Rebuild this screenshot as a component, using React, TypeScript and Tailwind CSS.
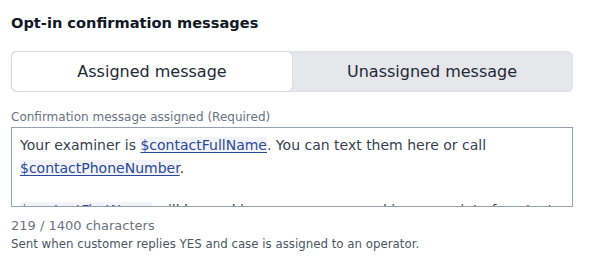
import { useState } from 'react';

const FONT = "font-['DejaVu_Sans',sans-serif]";

function Variable({ name }: { name: string }) {
  return (
    <span className="bg-[#f1f3f9] text-[#2a4a9b] underline underline-offset-2 decoration-1">{name}</span>
  );
}

export default function App() {
  const [tab, setTab] = useState<'assigned' | 'unassigned'>('assigned');

  return (
    <div className={`${FONT} bg-white w-[592px] h-[267px] px-[11px] pt-[13px] overflow-hidden`}>
      <h2 className="text-[14.6px] font-bold text-[#111827] leading-[20px]">Opt-in confirmation messages</h2>

      {/* Tabs */}
      <div className="mt-[18px] mr-[8px] flex rounded-[5px] bg-[#e5e7eb] border border-[#dfe2e6] h-[41px]">
        {(['assigned', 'unassigned'] as const).map((t) => (
          <button
            key={t}
            onClick={() => setTab(t)}
            className={`flex-1 text-[16px] text-[#1f2937] rounded-[5px] ${
              tab === t ? 'bg-white shadow-[0_0_2px_rgba(0,0,0,0.15)]' : ''
            }`}
          >
            {t === 'assigned' ? 'Assigned message' : 'Unassigned message'}
          </button>
        ))}
      </div>

      <div className="mt-[17px] text-[12px] text-[#6b7280] leading-[16px]">Confirmation message assigned (Required)</div>

      <div className="mt-[2px] mr-[8px] h-[80px] border border-[#97a1ad] overflow-hidden px-[8px] pt-[6px] text-[14px] leading-[23px] text-[#374151]">
        <p>
          Your examiner is <Variable name="$contactFullName" />. You can text them here or call{' '}
          <Variable name="$contactPhoneNumber" />.
        </p>
        <p className="mt-[19px]">
          <Variable name="$contactFirstName" /> will be working on your case and is your point of contact for the rest of the
          process.
        </p>
      </div>

      <div className="mt-[10px] text-[13px] text-[#6b7280] leading-[18px]">219 / 1400 characters</div>
      <div className="mt-[1px] text-[11.8px] text-[#4b5563] leading-[16px]">Sent when customer replies YES and case is assigned to an operator.</div>
    </div>
  );
}
